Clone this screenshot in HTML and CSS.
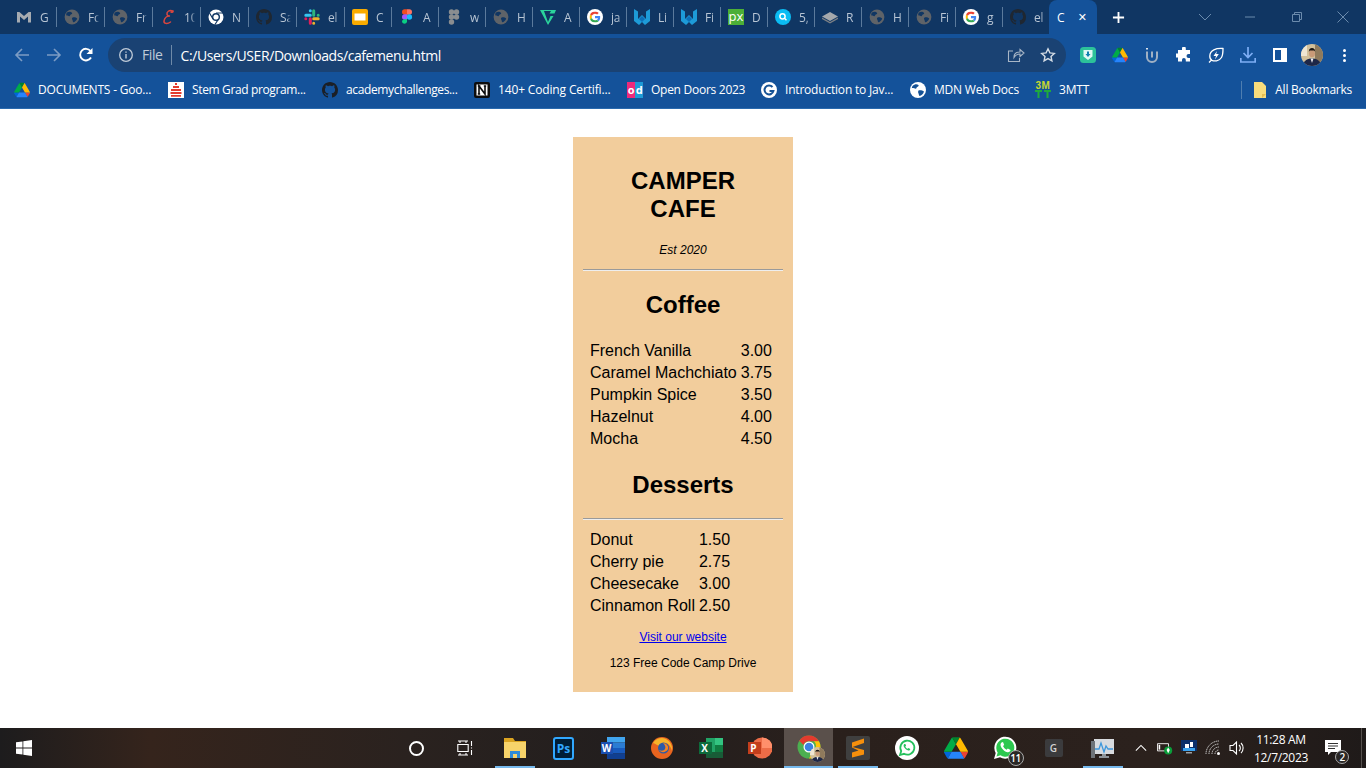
FILE: index.html
```html
<!DOCTYPE html>
<html lang="en">
<head>
<meta charset="utf-8">
<title>Camper Cafe Menu</title>
<link rel="stylesheet" href="styles.css">
</head>
<body>
<svg class="defs" aria-hidden="true">
  <symbol id="gmail" viewBox="0 0 16 16"><path fill="#a6abb1" d="M1 3h2.400L8 7l4.600-4H15v10.500h-3V7.600L8 11 4 7.600v5.900H1z"/></symbol>
  <symbol id="globe" viewBox="0 0 16 16"><circle cx="8" cy="8" r="7.400" fill="#5f6368"/><path fill="#103663" d="M3 3.600c2-1.600 4-1 5 .2.600 1-.4 1.400-1.200 1.800-.8.400-.6 1.600-1.600 1.600S3.600 6.400 2.400 6.600C2 5.400 2.300 4.400 3 3.600zM8.600 8.400c1.600-.4 3.600 0 4.600 1-.6 2-2.400 3.600-4 3.800-.6-1.200-.4-2-1-2.800-.6-1 .1-1.800.4-2z"/></symbol>
  <symbol id="escript" viewBox="0 0 16 16"><path fill="none" stroke="#d9463f" stroke-width="1.500" stroke-linecap="round" d="M13 2C9 .5 6.500 3 7 5.500c.2 1 1.500 1.600 3 1.500-3-.2-5.500 2-6 5-.3 2.500 3 3.500 6.500 1M13 2c.5 1-1 1.500-2 1"/></symbol>
  <symbol id="chromew" viewBox="0 0 16 16"><circle cx="8" cy="8" r="7.500" fill="#fff"/><circle cx="8" cy="8" r="4" fill="#103663"/><circle cx="8" cy="8" r="2.600" fill="#fff"/><path stroke="#103663" stroke-width="1.200" d="M8 4h7M5 10 1.500 4M10.500 10 7 15.500"/></symbol>
  <symbol id="github" viewBox="0 0 16 16"><path d="M8 0C3.580 0 0 3.580 0 8c0 3.540 2.290 6.530 5.470 7.590.4.070.55-.17.55-.38 0-.19-.01-.82-.01-1.490-2.010.37-2.530-.49-2.690-.94-.09-.23-.48-.94-.82-1.130-.28-.15-.68-.52-.01-.53.63-.01 1.080.58 1.230.82.720 1.210 1.870.87 2.330.66.070-.52.280-.87.510-1.070-1.780-.2-3.640-.89-3.640-3.950 0-.87.310-1.590.820-2.150-.08-.2-.36-1.020.080-2.120 0 0 .67-.21 2.200.82.640-.18 1.320-.27 2-.27s1.360.090 2 .27c1.530-1.040 2.200-.82 2.200-.82.440 1.100.160 1.920.080 2.120.510.56.820 1.270.820 2.150 0 3.070-1.870 3.750-3.650 3.950.290.25.540.73.540 1.480 0 1.070-.01 1.930-.01 2.200 0 .21.150.46.550.38A8.010 8.010 0 0 0 16 8c0-4.420-3.580-8-8-8z"/></symbol>
  <symbol id="slack" viewBox="0 0 16 16"><g stroke-width="3" stroke-linecap="round" fill="none"><path stroke="#36c5f0" d="M1.800 6.300h4.500M6.300 1.800h0"/><path stroke="#2eb67d" d="M9.700 6.300V1.800M14.200 6.300h0"/><path stroke="#ecb22e" d="M9.700 9.700h4.500M9.700 14.200h0"/><path stroke="#e01e5a" d="M6.300 9.700v4.500M1.800 9.700h0"/></g></symbol>
  <symbol id="slides" viewBox="0 0 16 16"><rect width="16" height="16" rx="2" fill="#f9ab00"/><rect x="2.500" y="4.500" width="11" height="7" fill="#fff"/></symbol>
  <symbol id="figma" viewBox="0 0 16 16"><path fill="#f24e1e" d="M3 3a2.700 2.700 0 0 1 2.700-2.700H8v5.400H5.700A2.700 2.700 0 0 1 3 3z"/><path fill="#ff7262" d="M8 .3h2.300a2.700 2.700 0 0 1 0 5.400H8z"/><path fill="#a259ff" d="M3 8a2.700 2.700 0 0 1 2.700-2.700H8v5.400H5.700A2.700 2.700 0 0 1 3 8z"/><circle cx="10.400" cy="8" r="2.700" fill="#1abcfe"/><path fill="#0acf83" d="M3 13a2.700 2.700 0 0 1 2.700-2.700H8V13a2.700 2.700 0 0 1-5 0z"/></symbol>
  <symbol id="figmag" viewBox="0 0 16 16"><g fill="#8a8d90"><circle cx="5.500" cy="3" r="2.700"/><circle cx="10.500" cy="3" r="2.700"/><circle cx="5.500" cy="8" r="2.700"/><circle cx="10.500" cy="8" r="2.700"/><circle cx="5.500" cy="13" r="2.700"/></g></symbol>
  <symbol id="vgreen" viewBox="0 0 16 16"><path fill="#2bd49c" d="M0 1h16l-1.500 3.500H9.500L11 2H4l4 11 2.500-6h3L8 16z"/></symbol>
  <symbol id="google" viewBox="0 0 16 16"><circle cx="8" cy="8" r="8" fill="#fff"/><svg x="2.500" y="2.500" width="11" height="11" viewBox="0 0 48 48"><path fill="#ea4335" d="M24 9.500c3.540 0 6.710 1.220 9.210 3.600l6.850-6.850C35.900 2.380 30.470 0 24 0 14.620 0 6.510 5.380 2.560 13.220l7.980 6.190C12.430 13.720 17.740 9.500 24 9.500z"/><path fill="#4285f4" d="M46.980 24.550c0-1.570-.15-3.090-.38-4.550H24v9.020h12.940c-.58 2.960-2.260 5.480-4.780 7.180l7.730 6c4.510-4.180 7.090-10.360 7.090-17.650z"/><path fill="#fbbc05" d="M10.530 28.590c-.48-1.450-.76-2.990-.76-4.590s.27-3.140.76-4.590l-7.980-6.190C.92 16.460 0 20.120 0 24c0 3.880.92 7.540 2.560 10.780l7.970-6.190z"/><path fill="#34a853" d="M24 48c6.480 0 11.930-2.130 15.890-5.810l-7.730-6c-2.150 1.450-4.920 2.300-8.160 2.300-6.260 0-11.570-4.220-13.470-9.910l-7.980 6.190C6.510 42.620 14.620 48 24 48z"/></svg></symbol>
  <symbol id="wblue" viewBox="0 0 16 16"><path fill="#1d9bd8" d="M0 0l4 2.500v7.500L8 6l4 4V2.500L16 0v12l-5 4-3-3-3 3-5-4z"/><path fill="#0d6fb8" d="M5 10l3-3 3 3-3 3z"/></symbol>
  <symbol id="pixiv" viewBox="0 0 16 16"><rect width="16" height="16" fill="#4caf37"/><text x="8" y="12" text-anchor="middle" font-family="Open Sans" font-size="13" fill="#fff">px</text></symbol>
  <symbol id="qsearch" viewBox="0 0 16 16"><circle cx="8" cy="8" r="8" fill="#0bbcf3"/><circle cx="7.500" cy="7.300" r="2.600" fill="none" stroke="#fff" stroke-width="1.500"/><path stroke="#fff" stroke-width="1.500" d="M9.500 9.200l2 2"/></symbol>
  <symbol id="layers" viewBox="0 0 16 16"><path fill="#a4a8ac" d="M8 3l8 4.500-8 4.500-8-4.500z"/><path fill="#7c8085" d="M0 8.500l8 4.500 8-4.500v1.500l-8 4.500L0 10z"/></symbol>
  <symbol id="back" viewBox="0 0 16 16"><path fill="none" stroke="currentColor" stroke-width="1.600" d="M15 8H2M8 2 2 8l6 6"/></symbol>
  <symbol id="forward" viewBox="0 0 16 16"><path fill="none" stroke="currentColor" stroke-width="1.600" d="M1 8h13M8 2l6 6-6 6"/></symbol>
  <symbol id="reload" viewBox="0 0 16 16"><path fill="none" stroke="#fff" stroke-width="1.900" d="M13 10.500A5.800 5.800 0 1 1 12.500 4"/><path fill="#fff" d="M14.500 1v6h-6z"/></symbol>
  <symbol id="info" viewBox="0 0 16 16"><circle cx="8" cy="8" r="6.300" fill="none" stroke="#c0cbd8" stroke-width="1.300"/><path fill="#c0cbd8" d="M7.300 7h1.400v4.600H7.300zM7.300 4.400h1.400v1.400H7.300z"/></symbol>
  <symbol id="share" viewBox="0 0 18 16"><path fill="none" stroke="#a8b6c6" stroke-width="1.100" d="M6 4H1.500v10.500h11V11M7 10.500c0-3.500 2.500-5.500 6-5.500V2.500L17 6l-4 3.500V7c-3 0-4.500 1-6 3.500z"/></symbol>
  <symbol id="star" viewBox="0 0 16 16"><path fill="none" stroke="#d5dde6" stroke-width="1.400" d="M8 1.800l1.900 4.100 4.400.5-3.300 3 .9 4.400L8 11.600l-3.900 2.200.9-4.400-3.300-3 4.400-.5z"/></symbol>
  <symbol id="ext1" viewBox="0 0 16 16"><rect width="16" height="16" rx="3.500" fill="#2cc29a"/><path fill="#dff8f4" d="M3.500 3h9v6.500L8 13 3.500 9.500z"/><path fill="#0e7fb0" d="M7 4.500h2V7h1.500L8 10 5.500 7H7z"/></symbol>
  <symbol id="drive" viewBox="0 0 87.300 78"><path fill="#0066da" d="m6.600 66.850 3.850 6.650c.8 1.400 1.950 2.500 3.300 3.300l13.750-23.800h-27.500c0 1.550.4 3.100 1.200 4.500z"/><path fill="#00ac47" d="m43.650 25-13.750-23.800c-1.350.8-2.500 1.900-3.300 3.300l-25.400 44a9.060 9.060 0 0 0 -1.200 4.500h27.500z"/><path fill="#ea4335" d="m73.550 76.800c1.350-.8 2.500-1.900 3.300-3.300l1.600-2.750 7.650-13.250c.8-1.400 1.200-2.950 1.200-4.500h-27.502l5.852 11.500z"/><path fill="#00832d" d="m43.650 25 13.750-23.800c-1.350-.8-2.900-1.200-4.500-1.200h-18.500c-1.600 0-3.150.45-4.500 1.200z"/><path fill="#2684fc" d="m59.800 53h-32.300l-13.750 23.800c1.350.8 2.900 1.200 4.500 1.200h50.800c1.600 0 3.150-.45 4.500-1.200z"/><path fill="#ffba00" d="m73.400 26.500-12.700-22c-.8-1.400-1.950-2.500-3.300-3.300l-13.750 23.800 16.150 28h27.450c0-1.550-.4-3.100-1.200-4.500z"/></symbol>
  <symbol id="magnet" viewBox="0 0 16 16"><path fill="none" stroke="#9fb0c4" stroke-width="2" d="M3 4.500V10a5 5 0 0 0 10 0V4.500"/><path fill="none" stroke="#9fb0c4" stroke-width="2" d="M8 4.500v6"/><path stroke="#dfe6ee" stroke-width="2" d="M3 1v1.500"/></symbol>
  <symbol id="puzzle" viewBox="0 0 16 16"><path fill="#fff" d="M6 1.500a1.900 1.900 0 0 1 3.800 0V3H14v4h-1.500a2 2 0 0 0 0 4H14v3.500H9.800V13a1.900 1.900 0 0 0-3.800 0v1.500H2V10.500H.8a2 2 0 0 1 0-4H2V3h4z"/></symbol>
  <symbol id="leaf" viewBox="0 0 16 16"><path fill="none" stroke="#fff" stroke-width="1.300" d="M15 1.500C8 1 2 3 1.800 9c-.1 2 .8 3.500 2.200 4.300 2 1 7 1.200 9.500-2.800 1.500-2.500 1.500-5.500 1.500-9zM1 15.500l3-3"/><path fill="#fff" d="M9 4 5.500 9H8l-1 3.500L10.800 7H8.200z"/></symbol>
  <symbol id="download" viewBox="0 0 16 16"><path fill="none" stroke="#7eaef5" stroke-width="1.700" d="M8 0v10M3.500 6 8 10.500 12.500 6M.8 11v4h14.400v-4"/></symbol>
  <symbol id="sidepanel" viewBox="0 0 14 14"><path fill="#fff" d="M0 0h14v14H0zM2 2v10h6V2z" fill-rule="evenodd"/></symbol>
  <symbol id="avatar" viewBox="0 0 22 22"><defs><clipPath id="avc"><circle cx="11" cy="11" r="11"/></clipPath></defs><g clip-path="url(#avc)"><rect width="22" height="22" fill="#d2c09a"/><rect x="14" width="8" height="22" fill="#8f7a5c"/><rect width="6" height="12" fill="#efe6d2"/><path fill="#1d2748" d="M2 22c0-5 4-7.500 9-7.500S20 17 20 22z"/><path fill="#e9e9ee" d="M9.500 14.500h3L11 19z"/><ellipse cx="11" cy="9.500" rx="3" ry="3.800" fill="#c99a78"/><path fill="#1a1512" d="M7.800 8c0-3 1.300-4 3.200-4s3.200 1 3.200 4l-1-1.500h-4.500z"/></g></symbol>
  <symbol id="notion" viewBox="0 0 16 16"><rect width="16" height="16" rx="2" fill="#0d0d0d"/><rect x="2.500" y="2.500" width="11" height="11" fill="#fff"/><path fill="none" stroke="#0d0d0d" stroke-width="1.600" d="M5 12V4l6 8V4M3.800 4h2.600M9.800 4h2.400M3.800 12h2.400"/></symbol>
  <symbol id="stem" viewBox="0 0 16 16"><rect width="16" height="16" fill="#fff"/><path fill="#e23b2e" d="M3 7h10v2H3zM2.500 10h11v2h-11zM3 13h10v1.800H3zM5 4h6v2H5zM7 1h2v2H7z"/></symbol>
  <symbol id="gcirc" viewBox="0 0 16 16"><circle cx="8" cy="8" r="8" fill="#fff"/><path fill="none" stroke="#155296" stroke-width="2" d="M11.500 5A4.500 4.500 0 1 0 12.400 9H8.500"/></symbol>
  <symbol id="mdn" viewBox="0 0 16 16"><circle cx="8" cy="8" r="8" fill="#fff"/><path fill="#155296" d="M2.500 4c2-2 4.500-2 6-1 .6 1-.6 1.600-1.400 2-.8.400-.4 1.800-1.400 1.800S3 5.800 1.800 6.200C1.900 5.200 2.100 4.600 2.500 4zM8.500 8.500c1.800-.4 4 0 5.500 1-.6 2.400-2.600 4.200-4.500 4.600-.8-1.200-.6-2.200-1.200-3.200-.4-1 0-2 .2-2.400z"/></symbol>
  <symbol id="tmbars" viewBox="0 0 16 8"><path fill="#1faa3c" d="M0 0h7v2H4.500v6h-2V2H0zM9 0h7v2h-2.500v6h-2V2H9z"/></symbol>
  <symbol id="folderb" viewBox="0 0 14 16"><path fill="#f8dc7c" d="M1 0h8l4 4v12H1z"/><path fill="#e6bd50" d="M9 16l4-4H9z"/></symbol>
  <symbol id="winlogo" viewBox="0 0 16 16"><path fill="#fff" d="M0 2.300 6.500 1.400v6.200H0zM7.300 1.300 16 0v7.600H7.300zM0 8.400h6.500v6.200L0 13.700zM7.300 8.400H16V16l-8.700-1.300z"/></symbol>
  <symbol id="taskview" viewBox="0 0 16 16"><path fill="none" stroke="#fff" stroke-width="1.100" d="M1 1h10M1 15h10M3 1v2M9 1v2M3 13v2M9 13v2M.8 4.500h10.400v7H.8zM14.500 1v5M14.500 7.500v1M14.500 10v5"/></symbol>
  <symbol id="explorer" viewBox="0 0 24 24"><path fill="#dba421" d="M1 2h9l2 3h11v17H1z"/><path fill="#f7d36a" d="M1 6h22v16H1z"/><path fill="#2e8bd8" d="M7 15h10v7h-3v-4h-4v4H7z"/></symbol>
  <symbol id="firefox" viewBox="0 0 24 24"><circle cx="12" cy="12" r="11" fill="#e8641f"/><path fill="#f7b32a" d="M3 7c3-5 9-6 13-4 4 2 7 7 6 12-1-4-3-7-6-8 2 3 1 6-1 7-3 1-5-1-5-1 1-2 0-3-3-4-1-1-2-1-4-2z"/><circle cx="13.500" cy="12" r="5.500" fill="#2c5aa8"/><path fill="#f58220" d="M13 7c3 0 6 3 5 6-2 4-7 4-9 1 2 1 5 1 6-1s0-4-2-6z"/></symbol>
  <symbol id="explc" viewBox="0 0 24 24"><rect x="7" y="2" width="17" height="20" fill="#21a366"/><rect x="16" y="2" width="8" height="7" fill="#33c481"/><rect x="16" y="9" width="8" height="7" fill="#107c41"/><rect x="7" y="16" width="17" height="6" fill="#185c37"/><rect y="6" width="13" height="12" fill="#0d6b3b"/></symbol>
  <symbol id="ppt" viewBox="0 0 24 24"><circle cx="14" cy="12" r="10.500" fill="#ed6c47"/><path fill="#ff8f6b" d="M14 1.500A10.500 10.500 0 0 1 24.500 12H14z"/><rect y="6" width="13" height="12" fill="#c43e1c"/></symbol>
  <symbol id="word" viewBox="0 0 24 24"><rect x="6" y="1" width="18" height="5.500" fill="#41a5ee"/><rect x="6" y="6.500" width="18" height="5.500" fill="#2b7cd3"/><rect x="6" y="12" width="18" height="5.500" fill="#185abd"/><rect x="6" y="17.500" width="18" height="5.500" fill="#103f91"/><rect y="6" width="12" height="12" fill="#1a4fb0"/></symbol>
  <symbol id="chrome" viewBox="0 0 24 24"><circle cx="12" cy="12" r="11.500" fill="#4caf50"/><path fill="#e33b2e" d="M12 .5A11.500 11.500 0 0 1 22 6.300H12A5.800 5.800 0 0 0 6.500 10L2.200 5.800A11.500 11.500 0 0 1 12 .5z"/><path fill="#ffc107" d="M22 6.300A11.500 11.500 0 0 1 12 23.500l5-8.500a5.800 5.800 0 0 0 0-8.700z"/><circle cx="12" cy="12" r="5.500" fill="#fff"/><circle cx="12" cy="12" r="4.300" fill="#3b82e0"/></symbol>
  <symbol id="sublime" viewBox="0 0 24 24"><rect width="24" height="24" rx="2" fill="#3f3f3f"/><path fill="#f58f0c" d="M18 4v4.500L6.500 12.500 18 15.500V20L6 23V18l6.500-2L6 13V8z" transform="translate(0 -1.500)"/></symbol>
  <symbol id="wacirc" viewBox="0 0 24 24"><circle cx="12" cy="12" r="12" fill="#fff"/><path fill="none" stroke="#25c05d" stroke-width="1.800" d="M5 19l1.200-4a7 7 0 1 1 2.800 2.800z"/><path fill="#25c05d" d="M9.300 8c-.8.700-1 2 0 3.500 1 1.500 2.400 2.700 4 3 1 .2 2-.5 2-1.500l-1.800-1-.8.800c-1-.4-2-1.400-2.400-2.400l.8-.8-.8-1.700z"/></symbol>
  <symbol id="wabig" viewBox="0 0 24 24"><path fill="#fff" d="M1 23l1.700-6A11 11 0 1 1 7 21.300z"/><path fill="#2cc84f" d="M3.500 20.500l1.200-4A9 9 0 1 1 7.500 19.300z"/><path fill="#fff" d="M8.500 6.500c-1.200 1-1.500 3 0 5.200 1.500 2.300 3.600 4 6 4.500 1.500.3 3-.7 3-2.200l-2.700-1.500-1.200 1.200c-1.500-.6-3-2.100-3.600-3.600l1.200-1.200L10 6z"/></symbol>
  <symbol id="perf" viewBox="0 0 24 24"><path fill="#d8dbdf" d="M3 3h20v15H3z"/><path fill="#8f9499" d="M11 18h4v2h3v2H8v-2h3z"/><path fill="none" stroke="#3d97dc" stroke-width="1.300" d="M4 13h4l2-6 3 9 2-6 2 3h5"/><path fill="#6e7378" d="M0 5h4v17H0z"/></symbol>
  <symbol id="caret" viewBox="0 0 14 8"><path fill="none" stroke="#fff" stroke-width="1.200" d="M1 7l6-6 6 6"/></symbol>
  <symbol id="battery" viewBox="0 0 20 16"><path fill="none" stroke="#fff" stroke-width="1.100" d="M.6 2.600h13.800v9H.6z"/><path fill="#fff" d="M2 4h2v6H2z"/><circle cx="14" cy="11" r="5" fill="#0a9d3a"/><path fill="#fff" d="M14 7.500l2 3-2 4-2-4z"/></symbol>
  <symbol id="traymon" viewBox="0 0 16 16"><rect width="16" height="11" fill="#0b2f6a"/><path fill="#fff" d="M4 4h4v5H4zM9 2h3v5H9z"/><path fill="#3aa2ef" d="M2 8h12v3H2z"/><path fill="#9aa0a6" d="M5 12h6v1.500H5z"/></symbol>
  <symbol id="wifi" viewBox="0 0 16 16"><path fill="none" stroke="#d6d6d6" stroke-width="1" stroke-dasharray="1.300 .6" d="M1 14A13 13 0 0 1 14 1M4 14A10 10 0 0 1 14 4M7 14a7 7 0 0 1 7-7M10 14a4 4 0 0 1 4-4"/><circle cx="13.500" cy="13.500" r="1.500" fill="#fff"/></symbol>
  <symbol id="speaker" viewBox="0 0 16 16"><path fill="none" stroke="#fff" stroke-width="1.100" d="M1 5.500h3L7.500 2v12L4 10.500H1zM10 5a4 4 0 0 1 0 6M12 3a7 7 0 0 1 0 10"/></symbol>
  <symbol id="notif" viewBox="0 0 16 16"><path fill="#fff" d="M0 0h16v12H6l-3 3v-3H0z"/><path stroke="#333" d="M3 3.500h10M3 6h10M3 8.500h7"/></symbol>
</svg>

<div class="tabstrip">
  <div class="tab wide"><svg class="fav"><use href="#gmail"/></svg><span class="tt">G</span></div>
  <div class="tab wide"><svg class="fav"><use href="#globe"/></svg><span class="tt">Fc</span></div>
  <div class="tab wide"><svg class="fav"><use href="#globe"/></svg><span class="tt">Fr</span></div>
  <div class="tab wide"><svg class="fav"><use href="#escript"/></svg><span class="tt">10</span></div>
  <div class="tab wide"><svg class="fav"><use href="#chromew"/></svg><span class="tt">N</span></div>
  <div class="tab wide"><svg class="fav dark"><use href="#github"/></svg><span class="tt">Sa</span></div>
  <div class="tab wide"><svg class="fav"><use href="#slack"/></svg><span class="tt">el</span></div>
  <div class="tab"><svg class="fav"><use href="#slides"/></svg><span class="tt">C</span></div>
  <div class="tab"><svg class="fav"><use href="#figma"/></svg><span class="tt">A</span></div>
  <div class="tab"><svg class="fav"><use href="#figmag"/></svg><span class="tt">w</span></div>
  <div class="tab"><svg class="fav"><use href="#globe"/></svg><span class="tt">H</span></div>
  <div class="tab"><svg class="fav"><use href="#vgreen"/></svg><span class="tt">A</span></div>
  <div class="tab"><svg class="fav"><use href="#google"/></svg><span class="tt">ja</span></div>
  <div class="tab"><svg class="fav"><use href="#wblue"/></svg><span class="tt">Li</span></div>
  <div class="tab"><svg class="fav"><use href="#wblue"/></svg><span class="tt">Fi</span></div>
  <div class="tab"><svg class="fav"><use href="#pixiv"/></svg><span class="tt">D</span></div>
  <div class="tab"><svg class="fav"><use href="#qsearch"/></svg><span class="tt">5,</span></div>
  <div class="tab"><svg class="fav"><use href="#layers"/></svg><span class="tt">R</span></div>
  <div class="tab"><svg class="fav"><use href="#globe"/></svg><span class="tt">H</span></div>
  <div class="tab"><svg class="fav"><use href="#globe"/></svg><span class="tt">Fi</span></div>
  <div class="tab"><svg class="fav"><use href="#google"/></svg><span class="tt">g</span></div>
  <div class="tab last"><svg class="fav dark"><use href="#github"/></svg><span class="tt">el</span></div>
  <div class="tab-active"><span class="active-title">C</span><span class="tab-x">✕</span></div>
  <span class="newtab"><svg class="plus" viewBox="0 0 14 14"><path stroke="#fff" stroke-width="2" d="M7 1v12M1 7h12"/></svg></span>
  <div class="winctl">
    <span class="winbtn"><svg class="w-ic" viewBox="0 0 14 14"><path fill="none" stroke="currentColor" d="M1 4l6 6 6-6"/></svg></span>
    <span class="winbtn"><svg class="w-ic" viewBox="0 0 14 14"><path stroke="currentColor" d="M1 7h10"/></svg></span>
    <span class="winbtn"><svg class="w-ic" viewBox="0 0 14 14"><path fill="none" stroke="currentColor" d="M2.500 4.500h7v7h-7zM4.500 4.500v-2h7v7h-2"/></svg></span>
    <span class="winbtn"><svg class="w-ic" viewBox="0 0 14 14"><path stroke="currentColor" d="M1.500 1.500l11 11M12.500 1.500l-11 11"/></svg></span>
  </div>
</div>

<div class="toolbar">
  <span class="tbtn dim"><svg class="ic16"><use href="#back"/></svg></span>
  <span class="tbtn dim"><svg class="ic16"><use href="#forward"/></svg></span>
  <span class="tbtn"><svg class="ic16"><use href="#reload"/></svg></span>
  <div class="omnibox">
    <svg class="ic16"><use href="#info"/></svg>
    <span class="scheme">File</span>
    <span class="url">C:/Users/USER/Downloads/cafemenu.html</span>
    <span class="omni-right">
      <span class="tbtn"><svg class="ic18"><use href="#share"/></svg></span>
      <span class="tbtn"><svg class="ic16"><use href="#star"/></svg></span>
    </span>
  </div>
  <div class="exts">
    <span class="tbtn"><svg class="ic16"><use href="#ext1"/></svg></span>
    <span class="tbtn"><svg class="ic16"><use href="#drive"/></svg></span>
    <span class="tbtn"><svg class="ic16"><use href="#magnet"/></svg></span>
    <span class="tbtn"><svg class="ic16"><use href="#puzzle"/></svg></span>
    <span class="tbtn"><svg class="ic16"><use href="#leaf"/></svg></span>
    <span class="tbtn"><svg class="ic16"><use href="#download"/></svg></span>
    <span class="tbtn"><svg class="ic14"><use href="#sidepanel"/></svg></span>
    <span class="tbtn"><svg class="ic22"><use href="#avatar"/></svg></span>
    <span class="tbtn"><span class="dots"><i></i><i></i><i></i></span></span>
  </div>
</div>

<div class="bookmarks">
  <div class="bm-list">
    <span class="bm"><svg class="ic16"><use href="#drive"/></svg>DOCUMENTS - Goo...</span>
    <span class="bm tight"><svg class="ic16"><use href="#stem"/></svg>Stem Grad program...</span>
    <span class="bm tight"><svg class="ic16 dark"><use href="#github"/></svg>academychallenges...</span>
    <span class="bm loose"><svg class="ic16"><use href="#notion"/></svg>140+ Coding Certifi...</span>
    <span class="bm tightish"><span class="od"><b class="od-l">o</b><b class="od-r">d</b></span>Open Doors 2023</span>
    <span class="bm"><svg class="ic16"><use href="#gcirc"/></svg>Introduction to Jav...</span>
    <span class="bm"><svg class="ic16"><use href="#mdn"/></svg>MDN Web Docs</span>
    <span class="bm"><span class="tm"><b class="tm-a">3M</b><svg class="tm-b"><use href="#tmbars"/></svg></span>3MTT</span>
  </div>
  <span class="bm all"><svg class="ic16"><use href="#folderb"/></svg>All Bookmarks</span>
</div>

<main class="page">
  <div class="menu">
    <h1 class="title">CAMPER CAFE</h1>
    <p class="est">Est 2020</p>
    <hr class="rule">
    <h2 class="section">Coffee</h2>
    <table class="items">
      <tr><td>French Vanilla</td><td>3.00</td></tr>
      <tr><td>Caramel Machchiato</td><td>3.75</td></tr>
      <tr><td>Pumpkin Spice</td><td>3.50</td></tr>
      <tr><td>Hazelnut</td><td>4.00</td></tr>
      <tr><td>Mocha</td><td>4.50</td></tr>
    </table>
    <h2 class="section desserts">Desserts</h2>
    <hr class="rule">
    <table class="items below-rule">
      <tr><td>Donut</td><td>1.50</td></tr>
      <tr><td>Cherry pie</td><td>2.75</td></tr>
      <tr><td>Cheesecake</td><td>3.00</td></tr>
      <tr><td>Cinnamon Roll</td><td>2.50</td></tr>
    </table>
    <p class="foot link-row"><a href="#">Visit our website</a></p>
    <p class="foot">123 Free Code Camp Drive</p>
  </div>
</main>

<footer class="taskbar">
  <span class="startbtn"><svg class="ic16"><use href="#winlogo"/></svg></span>
  <div class="apps">
    <span class="app"><span class="cortana"></span></span>
    <span class="app nudge"><svg class="ic16"><use href="#taskview"/></svg></span>
    <span class="app run"><svg class="ic24"><use href="#explorer"/></svg></span>
    <span class="app"><span class="ps">Ps</span></span>
    <span class="app"><span class="tile"><svg class="ic24"><use href="#word"/></svg><b class="tile-l">W</b></span></span>
    <span class="app"><svg class="ic24"><use href="#firefox"/></svg></span>
    <span class="app"><span class="tile"><svg class="ic24"><use href="#explc"/></svg><b class="tile-l">X</b></span></span>
    <span class="app"><span class="tile"><svg class="ic24"><use href="#ppt"/></svg><b class="tile-l">P</b></span></span>
    <span class="app active"><span class="tile"><svg class="ic24"><use href="#chrome"/></svg><svg class="mini"><use href="#avatar"/></svg></span></span>
    <span class="app run"><svg class="ic24"><use href="#sublime"/></svg></span>
    <span class="app"><svg class="ic24"><use href="#wacirc"/></svg></span>
    <span class="app"><svg class="ic24"><use href="#drive"/></svg></span>
    <span class="app"><span class="tile"><svg class="ic24"><use href="#wabig"/></svg><b class="count">11</b></span></span>
    <span class="app"><span class="gtile">G</span></span>
    <span class="app run"><svg class="ic24"><use href="#perf"/></svg></span>
  </div>
  <div class="tray">
    <span class="tray-i"><svg class="caret"><use href="#caret"/></svg></span>
    <span class="tray-i"><svg class="ic16"><use href="#battery"/></svg></span>
    <span class="tray-i"><svg class="ic16"><use href="#traymon"/></svg></span>
    <span class="tray-i"><svg class="ic16"><use href="#wifi"/></svg></span>
    <span class="tray-i"><svg class="ic16"><use href="#speaker"/></svg></span>
    <span class="clock"><span>11:28 AM</span><span>12/7/2023</span></span>
    <span class="notify"><svg class="ic16"><use href="#notif"/></svg><b class="count small">2</b></span>
    <span class="show-desktop"></span>
  </div>
</footer>
</body>
</html>
```

FILE: styles.css
```css
* { box-sizing: border-box; }
html, body { margin: 0; padding: 0; height: 100%; overflow: hidden; }
body {
  width: 1366px;
  height: 768px;
  display: flex;
  flex-direction: column;
  font-family: "Open Sans", "Noto Sans", sans-serif;
  background: #fff;
}
.defs { position: absolute; width: 0; height: 0; }

/* tab strip */
.tabstrip {
  height: 34px;
  flex: none;
  display: flex;
  align-items: center;
  padding-left: 9px;
  background: #103663;
  color: #b8c5d4;
  font-size: 12px;
}
.tab {
  width: 47px;
  height: 20px;
  flex: none;
  display: flex;
  align-items: center;
  gap: 8px;
  padding-left: 7px;
  border-right: 1px solid #5b7a9c;
  overflow: hidden;
}
.tab.wide { width: 48px; }
.tab.last { width: 46px; border-right: 0; }
.fav { width: 16px; height: 16px; flex: none; }
.fav.dark { fill: #1f2731; }
.ic16.dark { fill: #1b1f26; }
.tt {
  width: 11px;
  flex: none;
  overflow: hidden;
  white-space: nowrap;
  letter-spacing: -.2px;
  -webkit-mask-image: linear-gradient(90deg, #000 65%, transparent);
  mask-image: linear-gradient(90deg, #000 65%, transparent);
}
.tab-active {
  align-self: stretch;
  width: 48px;
  flex: none;
  display: flex;
  align-items: center;
  justify-content: space-between;
  padding: 0 10px 0 8px;
  background: #14529a;
  border-radius: 8px 8px 0 0;
  color: #fff;
}
.active-title { font-size: 12px; }
.tab-x { font-size: 11px; font-family: "DejaVu Sans", sans-serif; }
.newtab { margin-left: 15px; display: flex; }
.plus { width: 13px; height: 13px; }
.winctl { margin-left: auto; display: flex; color: #6b8bad; }
.winbtn { width: 46px; height: 34px; display: flex; align-items: center; justify-content: center; }
.w-ic { width: 14px; height: 14px; }

/* toolbar */
.toolbar {
  height: 38px;
  flex: none;
  display: flex;
  align-items: flex-start;
  padding: 4px 6px 0;
  background: #14529a;
}
.tbtn { width: 32px; height: 34px; flex: none; display: flex; align-items: center; justify-content: center; color: #fff; }
.tbtn.dim { color: #7c9cc4; }
.ic14 { width: 14px; height: 14px; }
.ic16 { width: 16px; height: 16px; flex: none; }
.ic18 { width: 18px; height: 16px; flex: none; }
.ic22 { width: 22px; height: 22px; }
.ic24 { width: 24px; height: 24px; display: block; }
.omnibox {
  width: 958px;
  height: 34px;
  margin-left: 6px;
  flex: none;
  display: flex;
  align-items: center;
  padding: 0 2px 0 10px;
  border-radius: 17px;
  background: #1a4273;
  font-size: 14px;
  color: #fff;
}
.scheme { margin-left: 8px; padding-right: 8px; border-right: 1px solid #6f8aa8; color: #c0cbd8; line-height: 20px; letter-spacing: -.4px; }
.url { margin-left: 9px; letter-spacing: -.43px; }
.omni-right { margin-left: auto; display: flex; }
.exts { margin-left: 6px; display: flex; }
.dots { display: flex; flex-direction: column; gap: 2px; }
.dots i { width: 3px; height: 3px; border-radius: 50%; background: #fff; }

/* bookmarks */
.bookmarks {
  height: 37px;
  flex: none;
  display: flex;
  align-items: center;
  padding: 0 14px 1px 14px;
  background: #14529a;
  border-bottom: 1px solid #2a6aae;
  color: #fff;
  font-size: 12px;
}
.bm-list {
  display: grid;
  grid-template-columns: 154px 154px 152px 153px 134px 149px 125px auto;
  width: 1228px;
}
.bm { display: flex; align-items: center; gap: 8px; white-space: nowrap; letter-spacing: -.2px; }
.bm.tight { letter-spacing: -.36px; }
.bm.tightish { letter-spacing: -.27px; }
.bm.loose { letter-spacing: -.15px; }
.bm.all { padding-left: 10px; border-left: 1px solid #4f7eb0; height: 18px; gap: 7px; letter-spacing: -.25px; }
.od { width: 16px; height: 16px; display: flex; font-size: 11px; line-height: 16px; }
.od-l { width: 8px; background: #ee2a7b; text-align: center; }
.od-r { width: 8px; background: #1e9ad6; text-align: center; }
.tm { width: 16px; display: flex; flex-direction: column; align-items: center; }
.tm-a {
  height: 9px;
  color: #c6d82e;
  font: 700 10px/9px "Liberation Sans", sans-serif;
  letter-spacing: .5px;
}
.tm-b { width: 16px; height: 8px; }

/* page */
.page { flex: 1; background: #fff; }
.menu {
  width: 220px;
  margin: 28px auto 0;
  padding: 14px 10px 22px;
  background: #f2cd9c;
  font-family: "Liberation Sans", Arial, sans-serif;
  color: #000;
}
.title { margin: 16px 0; padding: 0 20px; font-size: 24px; line-height: 28px; text-align: center; }
.est { margin: 0; padding-top: 4px; font-size: 12px; line-height: 14px; font-style: italic; text-align: center; }
.rule { margin: 12px 0 0; height: 2px; border: 0; border-top: 1px solid #9a9a9a; border-bottom: 1px solid #eee; }
.section { margin: 20px 0; font-size: 24px; line-height: 28px; text-align: center; }
.section.desserts { margin: 20px 0 19px; }
.items { margin-left: 4px; font-size: 16px; }
.items.below-rule { margin-top: 8px; }
.foot { margin: 12px 0 0; font-size: 12px; line-height: 14px; text-align: center; }
.link-row a { color: #00e; }

/* taskbar */
.taskbar {
  height: 40px;
  flex: none;
  display: flex;
  align-items: stretch;
  background: linear-gradient(90deg, #1d1c1d 0, #35241c 11%, #2a221f 30%, #221e1e 46%, #2a201c 60%, #2b211d 85%, #1f1a19 100%);
  color: #fff;
}
.startbtn { width: 48px; flex: none; display: flex; align-items: center; justify-content: center; }
.apps { margin-left: 344px; display: flex; }
.app { position: relative; width: 49px; flex: none; display: flex; align-items: center; justify-content: center; }
.app.nudge { padding-right: 2px; }
.app.run::after {
  content: "";
  position: absolute;
  left: 5px; right: 4px; bottom: 0;
  height: 2px;
  background: #76b9ed;
}
.app.active { background: #5a504b; border-bottom: 2px solid #76b9ed; }
.cortana { width: 15px; height: 15px; border: 2px solid #fff; border-radius: 50%; }
.ps {
  width: 21px; height: 23px;
  border: 2px solid #31a8ff;
  border-radius: 3px;
  background: #001e36;
  color: #31a8ff;
  font: 700 12px/19px "Open Sans", sans-serif;
  text-align: center;
}
.tile { position: relative; display: block; width: 24px; height: 24px; }
.tile-l {
  position: absolute;
  left: 0; top: 6px;
  width: 12px;
  font-size: 10px;
  line-height: 12px;
  text-align: center;
  color: #fff;
}
.mini { position: absolute; right: -4px; bottom: -3px; width: 15px; height: 15px; }
.count {
  position: absolute;
  right: -7px; bottom: -6px;
  width: 16px; height: 16px;
  border: 1px solid #aaa;
  border-radius: 50%;
  background: #2a2725;
  font-size: 10px;
  line-height: 14px;
  font-weight: 600;
  letter-spacing: -.5px;
  text-align: center;
}
.gtile {
  width: 18px; height: 18px;
  border-radius: 2px;
  background: #3b3b3d;
  color: #d4d4d4;
  font-size: 10px;
  font-weight: 600;
  line-height: 18px;
  text-align: center;
}
.tray { flex: 1; margin-left: 2px; display: flex; align-items: center; }
.tray-i { width: 24px; flex: none; display: flex; align-items: center; justify-content: center; }
.caret { width: 12px; height: 8px; }
.clock {
  width: 60px;
  margin-left: 2px;
  display: flex;
  flex-direction: column;
  align-items: center;
  gap: 3px;
  font-size: 12px;
  line-height: 15px;
  letter-spacing: -.3px;
}
.notify { position: relative; margin-left: 12px; width: 20px; display: flex; justify-content: center; }
.count.small { right: -6px; bottom: -8px; width: 14px; height: 14px; line-height: 12px; }
.show-desktop { margin-left: auto; width: 5px; height: 100%; border-left: 1px solid #55504d; }
```
